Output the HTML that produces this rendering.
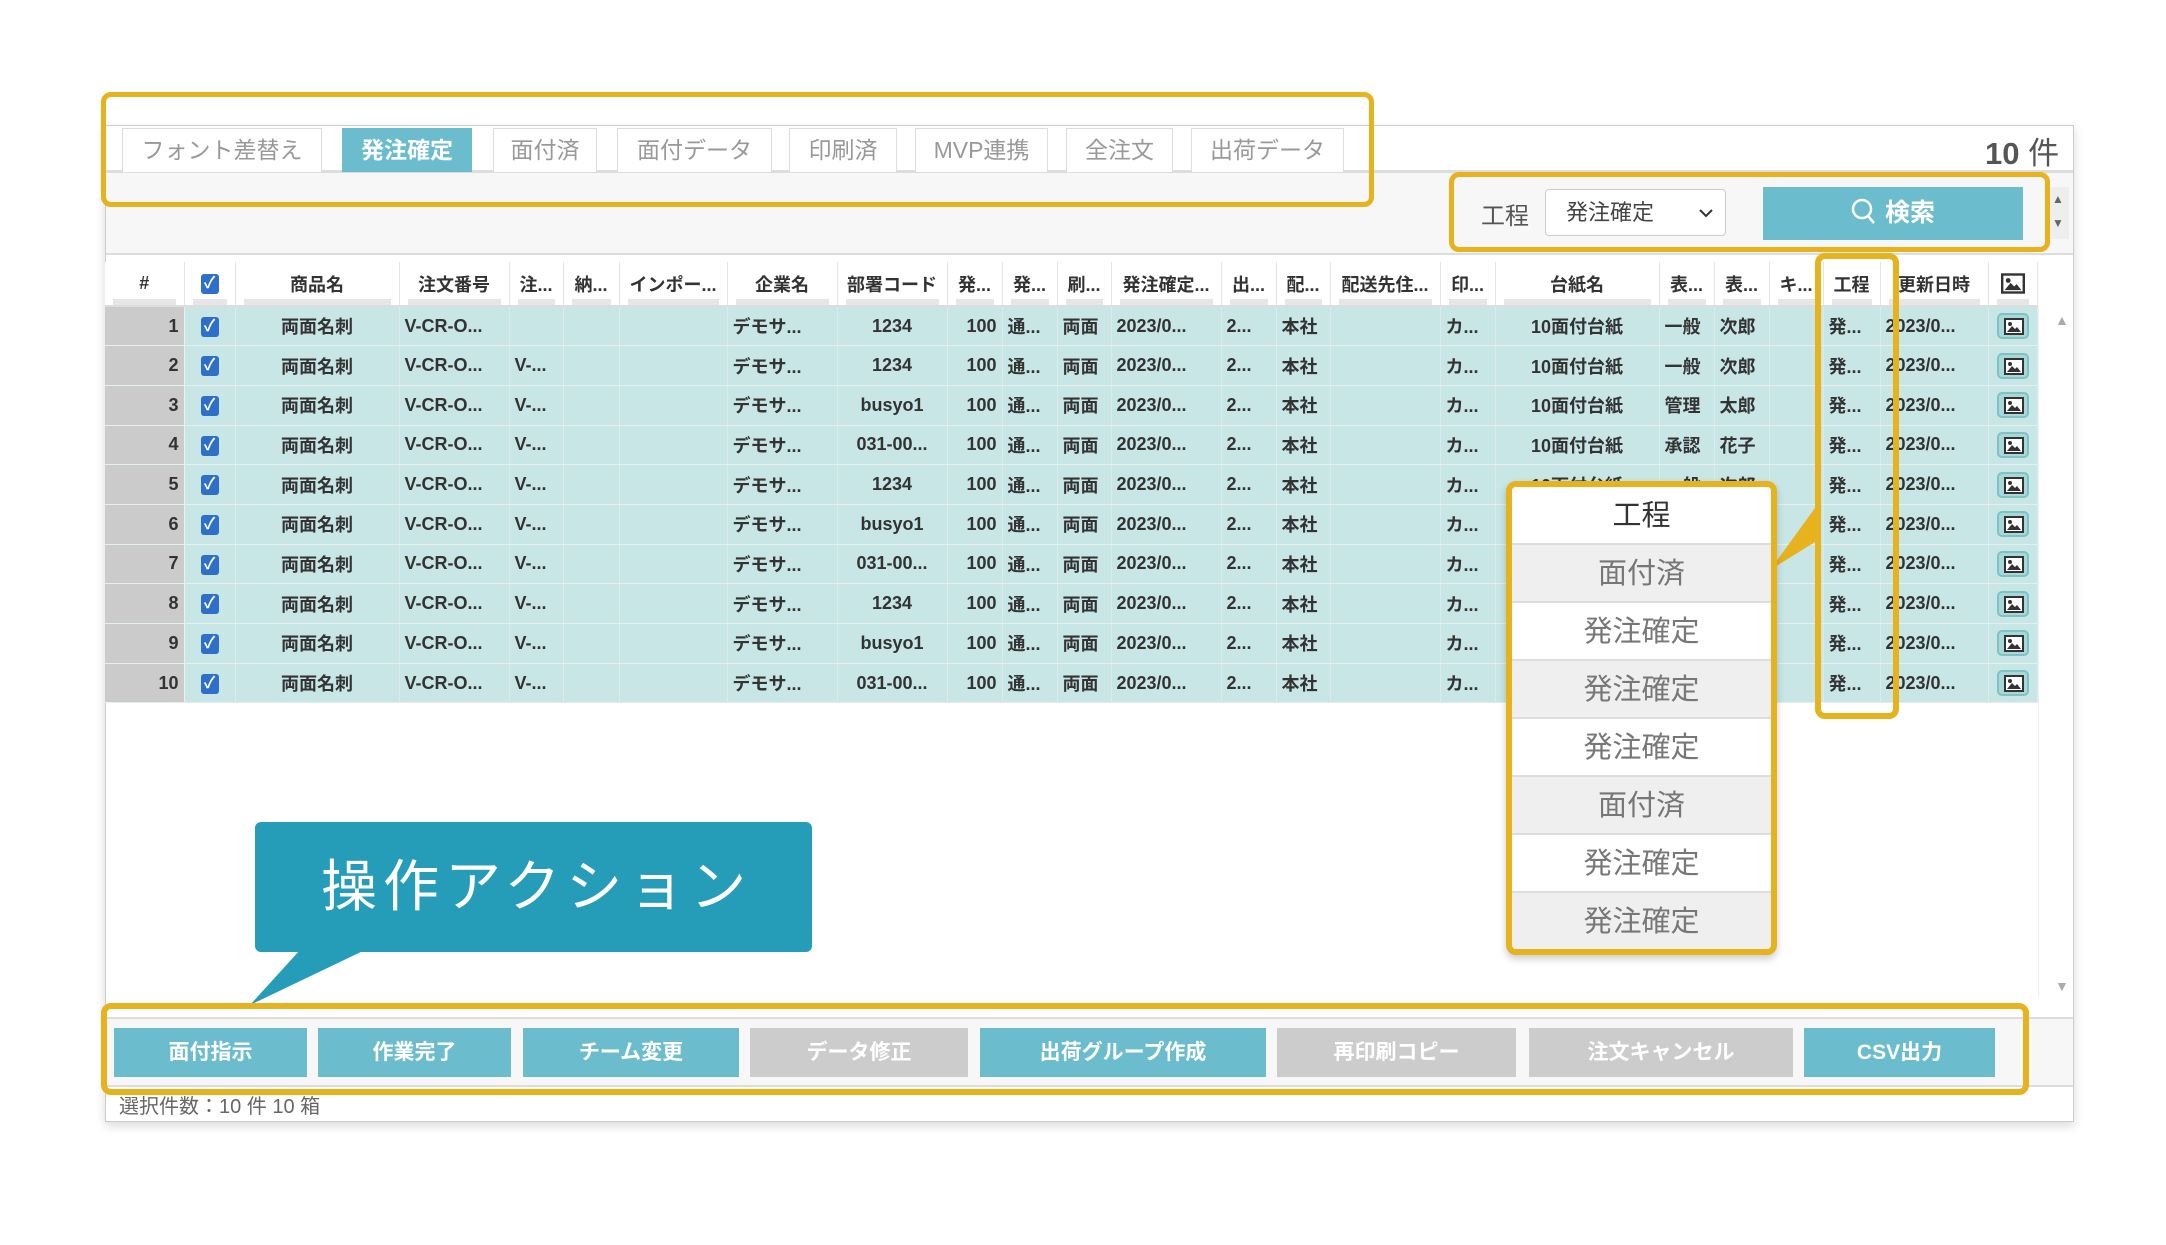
<!DOCTYPE html>
<html><head><meta charset="utf-8">
<style>
*{box-sizing:border-box;margin:0;padding:0}
body{width:2166px;height:1245px;background:#fff;position:relative;overflow:hidden;font-family:"Liberation Sans","Noto Sans CJK JP",sans-serif;color:#333}
.abs{position:absolute}
.panel{left:105px;top:125px;width:1969px;height:997px;border:1px solid #ccc;background:#fff;box-shadow:0 4px 10px rgba(0,0,0,.15)}
.tab{position:absolute;top:128px;height:44px;border:1px solid #ddd;border-bottom:none;background:#fff;color:#999;font-size:23px;line-height:42px;text-align:center}
.tab.on{background:#6bbccc;color:#fff;font-weight:bold;border-color:#6bbccc}
.yb{position:absolute;border:5px solid #e6b31e;border-radius:10px}
table{position:absolute;left:105px;top:262px;border-collapse:collapse;table-layout:fixed;width:1932px}
td,th{overflow:hidden;white-space:nowrap;font-size:18px;font-weight:bold;padding:0 5px}
th{height:44px;background:#fff;border-right:1px solid #e5e5e5;border-bottom:2px solid #ddd;text-align:center;color:#333;position:relative}
th:after{content:"";position:absolute;left:8px;right:8px;bottom:0;height:6px;background:#e6e6e6}
td{height:39.7px;background:#c8e6e6;border-right:1px solid #dcecec;border-bottom:1px solid #e4f0f0}
td.n{background:#cbcbcb;text-align:right;border-right:1px solid #eee}
.c{text-align:center}.r{text-align:right}
.cb{display:inline-block;width:18px;height:20px;background:#2e6fc9;border-radius:3px;color:#fff;font-size:16px;line-height:20px;text-align:center;vertical-align:middle}
.ic{display:inline-block;width:32px;height:26px;border:2px solid #7fc2c2;border-radius:5px;background:#a8d8d8;vertical-align:middle;position:relative}
.ic svg{position:absolute;left:5px;top:3px}
.btn{position:absolute;top:1028px;height:49px;color:#fff;font-weight:bold;font-size:21px;line-height:49px;text-align:center}
.t{background:#6bbccc}.g{background:#cccccc}
.dd div{height:58px;line-height:58px;text-align:center;font-size:29px;color:#777;border-bottom:2px solid #ddd}
</style></head><body>
<svg width="0" height="0" style="position:absolute"><defs><symbol id="pic" viewBox="0 0 20 17"><rect x="1" y="1" width="18" height="15" fill="#fff" stroke="#333" stroke-width="2"/><circle cx="6" cy="6" r="2" fill="#333"/><polygon points="3,14 8,8 11,11 13,9 17,14" fill="#333"/></symbol></defs></svg>
<div class="abs panel"></div>
<div class="abs" style="left:106px;top:172px;width:1967px;height:83px;background:#f7f7f7;border-top:1px solid #ddd;border-bottom:2px solid #ddd"></div>
<div class="abs" style="left:106px;top:128px;width:1967px;height:44px;border-bottom:2px solid #ddd"></div>

<div class="tab" style="left:122px;width:200px">フォント差替え</div>
<div class="tab on" style="left:342px;width:130px">発注確定</div>
<div class="tab" style="left:493px;width:104px">面付済</div>
<div class="tab" style="left:617px;width:155px">面付データ</div>
<div class="tab" style="left:789px;width:108px">印刷済</div>
<div class="tab" style="left:915px;width:133px">MVP連携</div>
<div class="tab" style="left:1066px;width:107px">全注文</div>
<div class="tab" style="left:1191px;width:153px">出荷データ</div>
<div class="yb" style="left:101px;top:92px;width:1273px;height:115px"></div>

<div class="abs" style="left:1985px;top:128px;font-size:31px;color:#555"><b>10</b> 件</div>

<div class="abs" style="left:1481px;top:196px;font-size:24px;color:#555">工程</div>
<div class="abs" style="left:1545px;top:189px;width:181px;height:47px;background:#fff;border:1px solid #ccc;border-radius:4px;font-size:22px;line-height:45px;padding-left:20px;color:#444">発注確定<svg style="position:absolute;right:12px;top:18px" width="14" height="10"><path d="M1 2l6 6 6-6" fill="none" stroke="#333" stroke-width="2"/></svg></div>
<div class="abs" style="left:1763px;top:187px;width:260px;height:53px;background:#6bbccc;color:#fff;font-weight:bold;font-size:25px;line-height:53px;text-align:center">
<svg width="26" height="28" viewBox="0 0 26 28" style="vertical-align:-5px;margin-right:8px"><circle cx="11" cy="11" r="9" fill="none" stroke="#fff" stroke-width="2.5"/><path d="M17 18l6 7" stroke="#fff" stroke-width="2.5"/></svg>検索</div>
<div class="abs" style="left:2047px;top:187px;width:22px;height:52px;background:#eee;color:#666;font-size:12px;text-align:center;line-height:24px">▲<br>▼</div>
<div class="yb" style="left:1449px;top:172px;width:601px;height:80px"></div>

<table>
<colgroup><col style="width:79px"><col style="width:51px"><col style="width:164px"><col style="width:110px"><col style="width:54px"><col style="width:56px"><col style="width:108px"><col style="width:110px"><col style="width:110px"><col style="width:55px"><col style="width:55px"><col style="width:54px"><col style="width:110px"><col style="width:55px"><col style="width:54px"><col style="width:110px"><col style="width:55px"><col style="width:164px"><col style="width:55px"><col style="width:55px"><col style="width:54px"><col style="width:57px"><col style="width:108px"><col style="width:49px"></colgroup>
<tr><th>#</th><th><span class="cb">✓</span></th><th>商品名</th><th>注文番号</th><th>注...</th><th>納...</th><th>インポー...</th><th>企業名</th><th>部署コード</th><th>発...</th><th>発...</th><th>刷...</th><th>発注確定...</th><th>出...</th><th>配...</th><th>配送先住...</th><th>印...</th><th>台紙名</th><th>表...</th><th>表...</th><th>キ...</th><th>工程</th><th>更新日時</th><th><svg width="24" height="21" style="vertical-align:middle"><use href="#pic"/></svg></th></tr>
<tr><td class="n">1</td><td class="c"><span class="cb">✓</span></td><td class="c">両面名刺</td><td>V-CR-O...</td><td></td><td></td><td></td><td>デモサ...</td><td class="c">1234</td><td class="r">100</td><td>通...</td><td>両面</td><td>2023/0...</td><td>2...</td><td>本社</td><td></td><td>カ...</td><td class="c">10面付台紙</td><td>一般</td><td>次郎</td><td></td><td>発...</td><td>2023/0...</td><td class="c"><span class="ic"><svg width="20" height="17"><use href="#pic"/></svg></span></td></tr>
<tr><td class="n">2</td><td class="c"><span class="cb">✓</span></td><td class="c">両面名刺</td><td>V-CR-O...</td><td>V-...</td><td></td><td></td><td>デモサ...</td><td class="c">1234</td><td class="r">100</td><td>通...</td><td>両面</td><td>2023/0...</td><td>2...</td><td>本社</td><td></td><td>カ...</td><td class="c">10面付台紙</td><td>一般</td><td>次郎</td><td></td><td>発...</td><td>2023/0...</td><td class="c"><span class="ic"><svg width="20" height="17"><use href="#pic"/></svg></span></td></tr>
<tr><td class="n">3</td><td class="c"><span class="cb">✓</span></td><td class="c">両面名刺</td><td>V-CR-O...</td><td>V-...</td><td></td><td></td><td>デモサ...</td><td class="c">busyo1</td><td class="r">100</td><td>通...</td><td>両面</td><td>2023/0...</td><td>2...</td><td>本社</td><td></td><td>カ...</td><td class="c">10面付台紙</td><td>管理</td><td>太郎</td><td></td><td>発...</td><td>2023/0...</td><td class="c"><span class="ic"><svg width="20" height="17"><use href="#pic"/></svg></span></td></tr>
<tr><td class="n">4</td><td class="c"><span class="cb">✓</span></td><td class="c">両面名刺</td><td>V-CR-O...</td><td>V-...</td><td></td><td></td><td>デモサ...</td><td class="c">031-00...</td><td class="r">100</td><td>通...</td><td>両面</td><td>2023/0...</td><td>2...</td><td>本社</td><td></td><td>カ...</td><td class="c">10面付台紙</td><td>承認</td><td>花子</td><td></td><td>発...</td><td>2023/0...</td><td class="c"><span class="ic"><svg width="20" height="17"><use href="#pic"/></svg></span></td></tr>
<tr><td class="n">5</td><td class="c"><span class="cb">✓</span></td><td class="c">両面名刺</td><td>V-CR-O...</td><td>V-...</td><td></td><td></td><td>デモサ...</td><td class="c">1234</td><td class="r">100</td><td>通...</td><td>両面</td><td>2023/0...</td><td>2...</td><td>本社</td><td></td><td>カ...</td><td class="c">10面付台紙</td><td>一般</td><td>次郎</td><td></td><td>発...</td><td>2023/0...</td><td class="c"><span class="ic"><svg width="20" height="17"><use href="#pic"/></svg></span></td></tr>
<tr><td class="n">6</td><td class="c"><span class="cb">✓</span></td><td class="c">両面名刺</td><td>V-CR-O...</td><td>V-...</td><td></td><td></td><td>デモサ...</td><td class="c">busyo1</td><td class="r">100</td><td>通...</td><td>両面</td><td>2023/0...</td><td>2...</td><td>本社</td><td></td><td>カ...</td><td class="c">10面付台紙</td><td>管理</td><td>太郎</td><td></td><td>発...</td><td>2023/0...</td><td class="c"><span class="ic"><svg width="20" height="17"><use href="#pic"/></svg></span></td></tr>
<tr><td class="n">7</td><td class="c"><span class="cb">✓</span></td><td class="c">両面名刺</td><td>V-CR-O...</td><td>V-...</td><td></td><td></td><td>デモサ...</td><td class="c">031-00...</td><td class="r">100</td><td>通...</td><td>両面</td><td>2023/0...</td><td>2...</td><td>本社</td><td></td><td>カ...</td><td class="c">10面付台紙</td><td>承認</td><td>花子</td><td></td><td>発...</td><td>2023/0...</td><td class="c"><span class="ic"><svg width="20" height="17"><use href="#pic"/></svg></span></td></tr>
<tr><td class="n">8</td><td class="c"><span class="cb">✓</span></td><td class="c">両面名刺</td><td>V-CR-O...</td><td>V-...</td><td></td><td></td><td>デモサ...</td><td class="c">1234</td><td class="r">100</td><td>通...</td><td>両面</td><td>2023/0...</td><td>2...</td><td>本社</td><td></td><td>カ...</td><td class="c">10面付台紙</td><td>一般</td><td>次郎</td><td></td><td>発...</td><td>2023/0...</td><td class="c"><span class="ic"><svg width="20" height="17"><use href="#pic"/></svg></span></td></tr>
<tr><td class="n">9</td><td class="c"><span class="cb">✓</span></td><td class="c">両面名刺</td><td>V-CR-O...</td><td>V-...</td><td></td><td></td><td>デモサ...</td><td class="c">busyo1</td><td class="r">100</td><td>通...</td><td>両面</td><td>2023/0...</td><td>2...</td><td>本社</td><td></td><td>カ...</td><td class="c">10面付台紙</td><td>管理</td><td>太郎</td><td></td><td>発...</td><td>2023/0...</td><td class="c"><span class="ic"><svg width="20" height="17"><use href="#pic"/></svg></span></td></tr>
<tr><td class="n">10</td><td class="c"><span class="cb">✓</span></td><td class="c">両面名刺</td><td>V-CR-O...</td><td>V-...</td><td></td><td></td><td>デモサ...</td><td class="c">031-00...</td><td class="r">100</td><td>通...</td><td>両面</td><td>2023/0...</td><td>2...</td><td>本社</td><td></td><td>カ...</td><td class="c">10面付台紙</td><td>承認</td><td>花子</td><td></td><td>発...</td><td>2023/0...</td><td class="c"><span class="ic"><svg width="20" height="17"><use href="#pic"/></svg></span></td></tr>
</table>
<div class="abs" style="left:2055px;top:312px;color:#aaa;font-size:14px">▲</div>
<div class="abs" style="left:2055px;top:978px;color:#aaa;font-size:14px">▼</div>
<div class="abs" style="left:2038px;top:306px;width:1px;height:690px;background:#eee"></div>

<div class="yb" style="left:1815px;top:253px;width:84px;height:466px;border-width:6px"></div>
<svg class="abs" style="left:1770px;top:500px" width="50" height="80"><polygon points="0,70 45,8 45,42" fill="#e6b31e"/></svg>
<div class="abs dd" style="left:1506px;top:481px;width:271px;height:474px;border:6px solid #e6b31e;border-radius:10px;overflow:hidden;background:#fff;box-shadow:0 4px 8px rgba(0,0,0,.2)">
<div style="background:#fff;color:#333">工程</div>
<div style="background:#efefef">面付済</div>
<div style="background:#fff">発注確定</div>
<div style="background:#efefef">発注確定</div>
<div style="background:#fff">発注確定</div>
<div style="background:#efefef">面付済</div>
<div style="background:#fff">発注確定</div>
<div style="background:#efefef">発注確定</div>
</div>

<div class="abs" style="left:255px;top:822px;width:557px;height:130px;background:#259db9;border-radius:6px;color:#fff;font-size:56px;line-height:130px;padding-left:66px;letter-spacing:6px">操作アクション</div>
<svg class="abs" style="left:245px;top:950px" width="130" height="60"><polygon points="55,0 120,0 5,55" fill="#259db9"/></svg>

<div class="abs" style="left:106px;top:1017px;width:1967px;height:70px;background:#f7f7f7;border-top:2px solid #ddd;border-bottom:2px solid #ddd"></div>
<div class="btn t" style="left:114px;width:193px">面付指示</div>
<div class="btn t" style="left:318px;width:193px">作業完了</div>
<div class="btn t" style="left:523px;width:216px">チーム変更</div>
<div class="btn g" style="left:750px;width:218px">データ修正</div>
<div class="btn t" style="left:980px;width:286px">出荷グループ作成</div>
<div class="btn g" style="left:1277px;width:239px">再印刷コピー</div>
<div class="btn g" style="left:1529px;width:264px">注文キャンセル</div>
<div class="btn t" style="left:1804px;width:191px">CSV出力</div>
<div class="abs" style="left:119px;top:1090px;font-size:20px;color:#666">選択件数：10 件 10 箱</div>
<div class="yb" style="left:101px;top:1003px;width:1928px;height:92px;border-width:6px"></div>
</body></html>
